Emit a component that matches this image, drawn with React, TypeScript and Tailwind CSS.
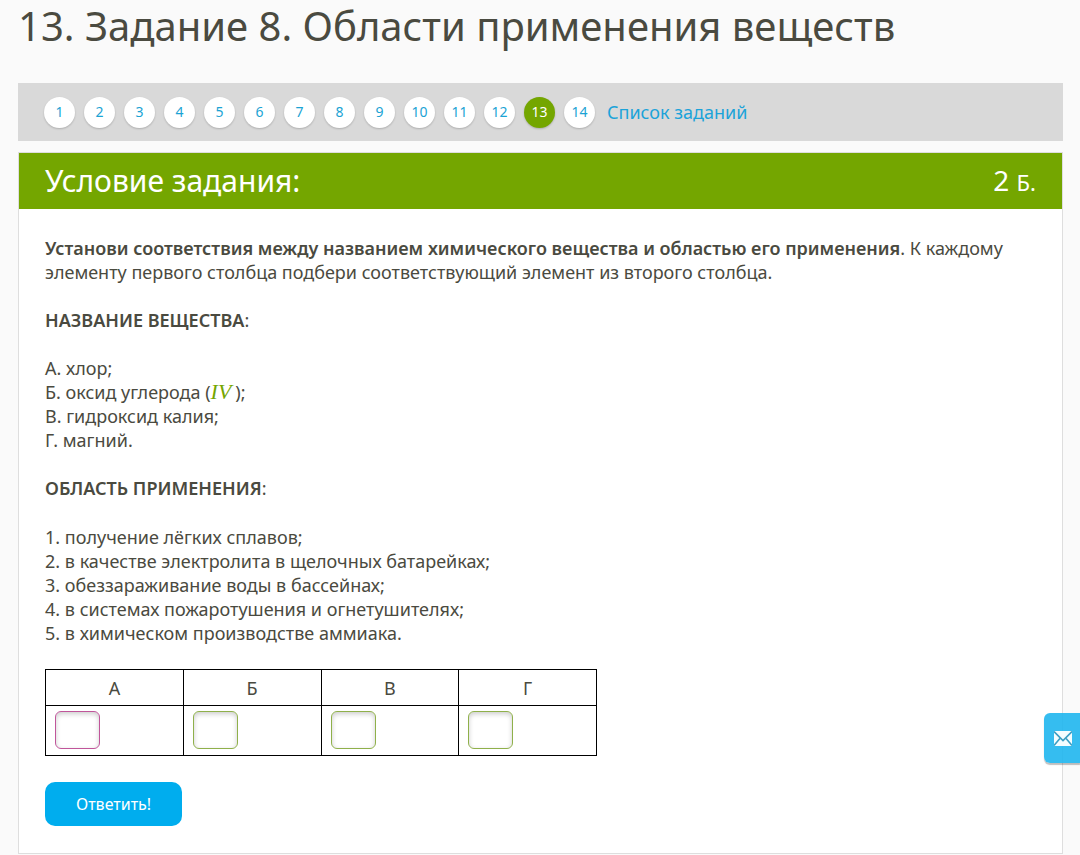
import { useState } from "react";

interface TaskLinkProps {
  number: number;
  active?: boolean;
}

const TASKS = [1, 2, 3, 4, 5, 6, 7, 8, 9, 10, 11, 12, 13, 14];
const CURRENT_TASK = 13;
const LETTERS = ["А", "Б", "В", "Г"];

const TaskLink: React.FC<TaskLinkProps> = ({ number, active }) => {
  return (
    <a
      href={`#task-${number}`}
      aria-current={active ? "page" : undefined}
      className={`flex size-[31px] items-center justify-center rounded-full text-sm shadow-[0_1px_2px_rgba(0,0,0,0.2)] ${
        active ? "bg-[#74a600] text-white" : "bg-white text-[#1ba3d4]"
      }`}
    >
      {number}
    </a>
  );
};

const TaskNav = () => {
  return (
    <nav className="mt-[31px] flex flex-wrap items-center gap-[9px] bg-[#d9d9d9] px-[26px] py-[13px]">
      {TASKS.map((n) => (
        <TaskLink key={n} number={n} active={n === CURRENT_TASK} />
      ))}
      <a href="#tasks" className="ml-[3px] text-lg leading-8 text-[#1ba3d9]">
        Список заданий
      </a>
    </nav>
  );
};

const AnswerTable = () => {
  const [answers, setAnswers] = useState<Record<string, string>>({});

  return (
    <table className="mt-6 w-[552px] table-fixed border-collapse border border-black">
      <thead>
        <tr>
          {LETTERS.map((letter) => (
            <th
              key={letter}
              id={`col-${letter}`}
              className="h-9 border border-black p-0 text-center font-normal"
            >
              {letter}
            </th>
          ))}
        </tr>
      </thead>
      <tbody>
        <tr>
          {LETTERS.map((letter, i) => (
            <td
              key={letter}
              className="border border-black px-[9px] pt-[5px] pb-1.5"
            >
              <input
                type="text"
                aria-labelledby={`col-${letter}`}
                value={answers[letter] ?? ""}
                onChange={(e) =>
                  setAnswers({ ...answers, [letter]: e.target.value })
                }
                className={`block h-[38px] w-[45px] rounded-md border bg-white text-center shadow-[inset_0_2px_5px_rgba(0,0,0,0.2)] outline-none ${
                  i === 0 ? "border-[#c0559a]" : "border-[#8fb04a]"
                }`}
              />
            </td>
          ))}
        </tr>
      </tbody>
    </table>
  );
};

const App = () => {
  return (
    <div className="min-h-screen bg-[#fafafa] pr-[17px] pl-[18px] font-['Noto_Sans',sans-serif] text-[#4a4a40]">
      <h1 className="text-[40px] leading-[52px]">
        13. Задание 8. Области применения веществ
      </h1>

      <TaskNav />

      <main className="mt-[11px] border border-[#dedede] bg-white">
        <header className="flex h-14 items-center justify-between bg-[#74a600] px-[26px] pb-0.5 text-white">
          <h2 className="text-[30px]">Условие задания:</h2>
          <p className="text-[28px]">
            2 <span className="text-[22px]">Б.</span>
          </p>
        </header>

        <div className="px-[26px] pt-[27px] pb-[27px] text-lg leading-6">
          <p>
            <b className="font-semibold">
              Установи соответствия между названием химического вещества и
              областью его применения
            </b>
            . К каждому элементу первого столбца подбери соответствующий элемент
            из второго столбца.
          </p>

          <h3 className="mt-6">
            <b className="font-semibold">НАЗВАНИЕ ВЕЩЕСТВА</b>:
          </h3>
          <p className="mt-6">
            А. хлор;
            <br />
            Б. оксид углерода (
            <i className="mr-1 font-['Liberation_Serif',serif] text-[22px] leading-none text-[#74a600]">
              IV
            </i>
            );
            <br />
            В. гидроксид калия;
            <br />
            Г. магний.
          </p>

          <h3 className="mt-6">
            <b className="font-semibold">ОБЛАСТЬ ПРИМЕНЕНИЯ</b>:
          </h3>
          <p className="mt-[25px]">
            1. получение лёгких сплавов;
            <br />
            2. в качестве электролита в щелочных батарейках;
            <br />
            3. обеззараживание воды в бассейнах;
            <br />
            4. в системах пожаротушения и огнетушителях;
            <br />
            5. в химическом производстве аммиака.
          </p>

          <AnswerTable />

          <button
            type="button"
            className="mt-[26px] h-11 rounded-[10px] bg-[#00adee] px-[31px] text-base text-white"
          >
            Ответить!
          </button>
        </div>
      </main>

      <button
        type="button"
        aria-label="Написать сообщение"
        className="fixed right-0 bottom-[92px] flex h-[50px] w-9 items-center justify-center rounded-l-md bg-[#1fb6ee]/90 shadow-[0_2px_1px_rgba(0,0,0,0.25)]"
      >
        <svg viewBox="0 0 18 15" className="ml-0.5 h-[15px] w-[18px]">
          <path d="M0 0h18v15H0z" fill="#f4fdff" />
          <path
            d="M0 .5 9 9.500 18 .5M0 14.500 6.300 7M18 14.500 11.700 7"
            fill="none"
            stroke="#3c9fc4"
            strokeWidth="1.600"
          />
        </svg>
      </button>
    </div>
  );
};

export default App;
